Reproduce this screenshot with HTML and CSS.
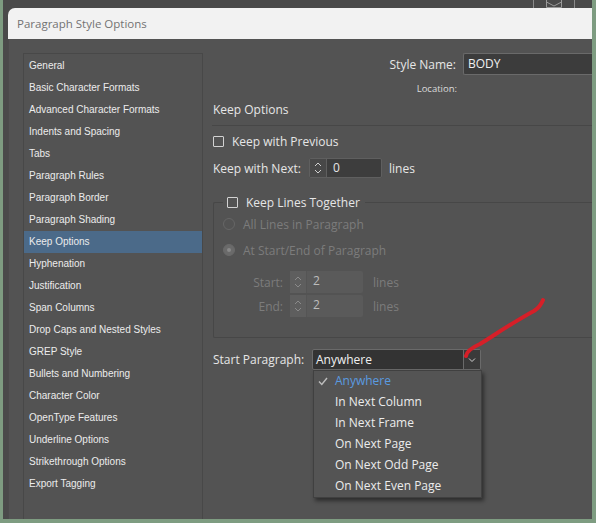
FILE: index.html
```html
<!DOCTYPE html>
<html lang="en">
<head>
  <meta charset="UTF-8" />
  <title>Paragraph Style Options</title>
  <link rel="stylesheet" href="styles.css">
</head>
<body>
  <div class="app">
    <!-- barra de la app detrás del diálogo -->
    <div class="strip">
      <span class="strip-ctrl">
        <svg width="16" height="8" viewBox="0 0 16 8"><path d="M0.5 0 V7.5 H15.5 V0 M0.5 2 L8 6 L15.5 2" fill="none" stroke="#9a9a9a" stroke-width="1"/></svg>
      </span>
    </div>

    <div class="dialog">
      <div class="titlebar">Paragraph Style Options</div>

      <div class="dialog-body">
        <ul class="nav">
          <li>General</li>
          <li>Basic Character Formats</li>
          <li>Advanced Character Formats</li>
          <li>Indents and Spacing</li>
          <li>Tabs</li>
          <li>Paragraph Rules</li>
          <li>Paragraph Border</li>
          <li>Paragraph Shading</li>
          <li class="active">Keep Options</li>
          <li>Hyphenation</li>
          <li>Justification</li>
          <li>Span Columns</li>
          <li>Drop Caps and Nested Styles</li>
          <li>GREP Style</li>
          <li>Bullets and Numbering</li>
          <li>Character Color</li>
          <li>OpenType Features</li>
          <li>Underline Options</li>
          <li>Strikethrough Options</li>
          <li>Export Tagging</li>
        </ul>

        <div class="main">
          <div class="name-row">
            <span class="right-label">Style Name:</span>
            <div class="text-field">BODY</div>
          </div>
          <div class="loc-row">
            <span class="right-label">Location:</span>
          </div>

          <h2 class="section-title">Keep Options</h2>

          <label class="check-row"><span class="box"></span>Keep with Previous</label>

          <div class="field-row">
            <span class="lbl lbl-next">Keep with Next:</span>
            <div class="spinner">
              <span class="spin-btns">
                <svg width="8" height="14" viewBox="0 0 8 14"><path d="M1 5 L4 2 L7 5 M1 9 L4 12 L7 9" fill="none" stroke="#cfcfcf" stroke-width="1"/></svg>
              </span>
              <span class="spin-val">0</span>
            </div>
            <span class="unit">lines</span>
          </div>

          <fieldset class="group">
            <legend><span class="box"></span>Keep Lines Together</legend>

            <div class="radio-row disabled"><span class="radio"></span>All Lines in Paragraph</div>
            <div class="radio-row disabled second"><span class="radio on"></span>At Start/End of Paragraph</div>

            <div class="spin-row disabled first">
              <span class="lbl lbl-small">Start:</span>
              <div class="spinner off">
                <span class="spin-btns">
                  <svg width="8" height="14" viewBox="0 0 8 14"><path d="M1 5 L4 2 L7 5 M1 9 L4 12 L7 9" fill="none" stroke="#8a8a8a" stroke-width="1"/></svg>
                </span>
                <span class="spin-val">2</span>
              </div>
              <span class="unit">lines</span>
            </div>
            <div class="spin-row disabled">
              <span class="lbl lbl-small">End:</span>
              <div class="spinner off">
                <span class="spin-btns">
                  <svg width="8" height="14" viewBox="0 0 8 14"><path d="M1 5 L4 2 L7 5 M1 9 L4 12 L7 9" fill="none" stroke="#8a8a8a" stroke-width="1"/></svg>
                </span>
                <span class="spin-val">2</span>
              </div>
              <span class="unit">lines</span>
            </div>
          </fieldset>

          <div class="field-row start-row">
            <span class="lbl lbl-start">Start Paragraph:</span>
            <div class="select-wrap">
              <div class="select">
                <span class="select-val">Anywhere</span>
                <span class="select-btn">
                  <svg width="8" height="6" viewBox="0 0 8 6"><path d="M1 1.5 L4 4.5 L7 1.5" fill="none" stroke="#d0d0d0" stroke-width="1"/></svg>
                </span>
              </div>
              <ul class="menu">
                <li class="checked">
                  <svg class="tick" width="10" height="9" viewBox="0 0 10 9"><path d="M1 4.5 L3.8 7.5 L9 1" fill="none" stroke="#bdbdbd" stroke-width="1.4"/></svg>
                  Anywhere
                </li>
                <li>In Next Column</li>
                <li>In Next Frame</li>
                <li>On Next Page</li>
                <li>On Next Odd Page</li>
                <li>On Next Even Page</li>
              </ul>
            </div>
          </div>
        </div>
      </div>
    </div>
  </div>

  <!-- trazo rojo dibujado encima de la captura -->
  <svg class="annotation" width="596" height="523" viewBox="0 0 596 523" aria-hidden="true">
    <path d="M466 356 C467 351 473 347 480 344 C490 338 500 331 510 325 C520 319 528 314 534 311 C539 308 541 305 543 300" fill="none" stroke="#d61f28" stroke-width="4" stroke-linecap="round"/>
  </svg>
</body>
</html>
```

FILE: styles.css
```css
* {
  box-sizing: border-box;
}
body {
  margin: 0;
  width: 596px;
  height: 523px;
  background: #7e9c81;
  font-family: 'Open Sans', 'Noto Sans', sans-serif;
  color: #e6e6e6;
  position: relative;
  overflow: hidden;
}

/* Ventana de fondo */
.app {
  margin-left: 3px;
  width: 589px;
  height: 519px;
  background: #4a4a4a;
  padding-left: 5px;
}
.strip {
  height: 8px;
  display: flex;
  justify-content: flex-end;
  padding-right: 17px;
  overflow: hidden;
}
.strip-ctrl {
  display: flex;
  align-items: flex-end;
  height: 8px;
  padding: 0 12px;
  border-left: 1px solid #8a8a8a;
  border-right: 1px solid #8a8a8a;
}

/* Diálogo */
.dialog {
  width: 584px;
  height: 511px;
  overflow: hidden;
  background: #535353;
  border-radius: 7px 0 0 0;
}
.titlebar {
  height: 31px;
  background: #f2f2f2;
  color: #727272;
  font-size: 11.5px;
  line-height: 31px;
  padding-left: 9px;
}
.dialog-body {
  display: flex;
  height: 480px;
  border-left: 1px solid #4b4b4b;
}

/* Lista lateral */
.nav {
  list-style: none;
  margin: 14px 0 0 14px;
  padding: 1px 0 0;
  width: 180px;
  height: 480px;
  border: 1px solid #484848;
  border-bottom: none;
  font-family: 'Liberation Sans', Arial, sans-serif;
  font-size: 10px;
  color: #ececec;
  flex-shrink: 0;
}
.nav li {
  height: 22px;
  line-height: 22px;
  padding-left: 5px;
  white-space: nowrap;
}
.nav li.active {
  background: #4b6a89;
}

/* Panel principal */
.main {
  margin-left: 10px;
  width: 420px;
  flex-shrink: 0;
  font-size: 12px;
}
.name-row {
  margin-top: 14px;
  display: flex;
  align-items: center;
  height: 22px;
}
.right-label {
  display: inline-block;
  width: 243px;
  text-align: right;
  white-space: nowrap;
}
.text-field {
  margin-left: 7px;
  width: 170px;
  height: 22px;
  line-height: 20px;
  padding-left: 4px;
  background: #3c3c3c;
  border: 1px solid #6a6a6a;
  border-right: none;
  border-radius: 2px 0 0 2px;
  color: #f0f0f0;
}
.loc-row {
  margin-top: 8px;
  height: 12px;
  line-height: 12px;
  font-size: 9.5px;
  color: #dcdcdc;
}
.loc-row .right-label {
  width: 244px;
}
.section-title {
  margin: 7px 0 0;
  font-size: 12px;
  font-weight: normal;
  line-height: 16px;
  padding-bottom: 7px;
  border-bottom: 1px solid #474747;
  width: 400px;
  margin-left: -1px;
  padding-left: 1px;
}
.check-row {
  display: flex;
  align-items: center;
  margin-top: 7px;
  height: 16px;
}
.box {
  width: 11px;
  height: 11px;
  border: 1px solid #d2d2d2;
  border-radius: 1px;
  margin-right: 8px;
  flex-shrink: 0;
}
.field-row {
  display: flex;
  align-items: center;
  margin-top: 9px;
  height: 20px;
  white-space: nowrap;
}
.lbl-next {
  width: 96px;
}
.spinner {
  display: flex;
  width: 73px;
  height: 20px;
  background: #3d3d3d;
  border: 1px solid #5f5f5f;
  border-radius: 2px;
}
.spin-btns {
  width: 17px;
  display: flex;
  align-items: center;
  justify-content: center;
  background: #484848;
  border-right: 1px solid #5f5f5f;
}
.spin-val {
  padding-left: 6px;
  line-height: 18px;
}
.unit {
  margin-left: 7px;
}

/* Grupo "Keep Lines Together" */
.group {
  margin: 16px 0 0;
  padding: 0 0 20px 9px;
  width: 420px;
  border: 1px solid #474747;
  border-right: none;
  border-radius: 2px 0 0 2px;
}
.group legend {
  display: flex;
  align-items: center;
  height: 16px;
  padding: 0 5px 0 4px;
}
.radio-row {
  display: flex;
  align-items: center;
  height: 16px;
  margin-top: 6px;
}
.radio-row.second {
  margin-top: 10px;
}
.radio {
  width: 12px;
  height: 12px;
  border-radius: 50%;
  border: 1px solid #666;
  margin-right: 8px;
  position: relative;
}
.radio.on {
  background: #6a6a6a;
  border-color: #6a6a6a;
}
.radio.on::after {
  content: "";
  position: absolute;
  left: 3px;
  top: 3px;
  width: 4px;
  height: 4px;
  border-radius: 50%;
  background: #8a8a8a;
}
.disabled {
  color: #7c7c7c;
}
.spin-row {
  display: flex;
  align-items: center;
  height: 22px;
  margin-top: 2px;
}
.spin-row.first {
  margin-top: 13px;
}
.lbl-small {
  width: 60px;
  text-align: right;
  margin-right: 7px;
}
.spinner.off {
  height: 22px;
  background: #5a5a5a;
  border: none;
}
.spinner.off .spin-btns {
  background: #5e5e5e;
  border-right: 1px solid #555;
}
.spinner.off .spin-val {
  color: #bdbdbd;
  line-height: 20px;
}
.spin-row .unit {
  margin-left: 10px;
}

/* Desplegable */
.start-row {
  margin-top: 11px;
  height: 21px;
}
.lbl-start {
  width: 99px;
}
.select-wrap {
  position: relative;
}
.select {
  display: flex;
  width: 169px;
  height: 21px;
  background: #333;
  border: 1px solid #6a6a6a;
  border-radius: 2px;
}
.select-val {
  flex: 1;
  padding-left: 3px;
  line-height: 19px;
  color: #f0f0f0;
}
.select-btn {
  width: 17px;
  display: flex;
  align-items: center;
  justify-content: center;
  border-left: 1px solid #6a6a6a;
  background: #3a3a3a;
}
.menu {
  position: absolute;
  top: 21px;
  left: 1px;
  width: 169px;
  margin: 0;
  padding: 0;
  list-style: none;
  background: #545454;
  border: 1px solid #404040;
  box-shadow: 2px 3px 4px rgba(0, 0, 0, 0.45);
  z-index: 5;
}
.menu li {
  position: relative;
  height: 21px;
  line-height: 20px;
  padding-left: 21px;
  color: #ececec;
}
.menu li.checked {
  color: #5a9be0;
}
.tick {
  position: absolute;
  left: 4px;
  top: 6px;
}

/* Trazo rojo */
.annotation {
  position: absolute;
  top: 0;
  left: 0;
  pointer-events: none;
}
```
